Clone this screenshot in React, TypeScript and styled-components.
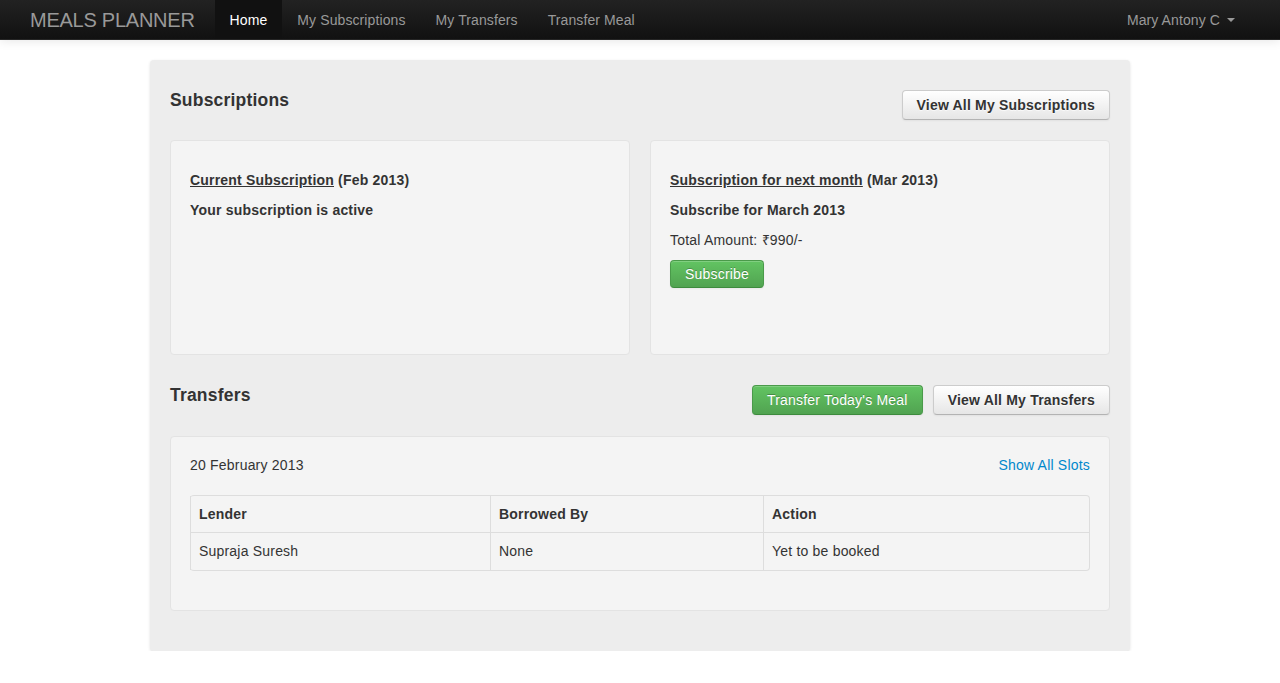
import React from "react";
import styled, { createGlobalStyle } from "styled-components";

const Global = createGlobalStyle`
  html, body { margin: 0; padding: 0; background: #fff; }
  body {
    font-family: "Liberation Sans", Arial, Helvetica, sans-serif;
    font-size: 14px;
    line-height: 20px;
    color: #333;
    letter-spacing: 0.2px;
  }
  * { box-sizing: border-box; }
`;

const NavBar = styled.div`
  height: 40px;
  background: linear-gradient(to bottom, #222222, #111111);
  border-bottom: 1px solid #252525;
  box-shadow: 0 1px 10px rgba(0, 0, 0, 0.1);
  display: flex;
  align-items: stretch;
  padding: 0 30px 0 10px;
`;

const Brand = styled.a`
  display: flex;
  align-items: center;
  padding: 0 20px;
  font-size: 20px;
  font-weight: 200;
  color: #999;
  text-decoration: none;
  letter-spacing: -0.25px;
`;

const NavLinks = styled.div`
  display: flex;
  align-items: stretch;
`;

const NavLink = styled.a<{ $active?: boolean }>`
  display: flex;
  align-items: center;
  padding: 0 15px;
  color: ${(p) => (p.$active ? "#fff" : "#999")};
  background: ${(p) => (p.$active ? "#111" : "transparent")};
  text-decoration: none;
  font-size: 14px;
  letter-spacing: 0.1px;
`;

const Spacer = styled.div`
  flex: 1;
`;

const Caret = styled.span`
  display: inline-block;
  width: 0;
  height: 0;
  margin-left: 7px;
  margin-top: 1px;
  border-top: 4px solid #999;
  border-left: 4px solid transparent;
  border-right: 4px solid transparent;
`;

const Container = styled.div`
  width: 980px;
  margin: 20px auto 0;
`;

const Well = styled.div`
  background: #ededed;
  border-radius: 4px;
  box-shadow: 0 1px 3px rgba(0, 0, 0, 0.12);
  padding: 20px;
`;

const SectionHead = styled.div<{ $flush?: boolean }>`
  display: flex;
  align-items: flex-start;
  justify-content: space-between;
  margin-bottom: ${(p) => (p.$flush ? "0" : "20px")};
`;

const Heading = styled.h4`
  margin: 10px 0 0;
  font-size: 17.5px;
  line-height: 20px;
  font-weight: bold;
  color: #333;
`;

const ButtonGroup = styled.div`
  display: flex;
  gap: 10px;
  margin-top: 10px;
`;

const Button = styled.button<{ $variant?: "default" | "success"; $bold?: boolean }>`
  font-family: inherit;
  font-size: 14px;
  line-height: 20px;
  letter-spacing: 0.2px;
  padding: ${(p) => (p.$variant === "success" ? "3px 14px" : "4px 14px")};
  border-radius: 4px;
  cursor: pointer;
  font-weight: ${(p) => (p.$bold ? "bold" : "normal")};
  ${(p) =>
    p.$variant === "success"
      ? `
    color: #fff;
    text-shadow: 0 -1px 0 rgba(0,0,0,0.25);
    background: linear-gradient(to bottom, #62c462, #51a351);
    border: 1px solid #4a9a4a;
    border-bottom-color: #3d8b3d;
    box-shadow: inset 0 1px 0 rgba(255,255,255,0.2), 0 1px 2px rgba(0,0,0,0.05);
  `
      : `
    color: #333;
    text-shadow: 0 1px 1px rgba(255,255,255,0.75);
    background: linear-gradient(to bottom, #ffffff, #e6e6e6);
    border: 1px solid #cccccc;
    border-bottom-color: #b3b3b3;
    box-shadow: inset 0 1px 0 rgba(255,255,255,0.2), 0 1px 2px rgba(0,0,0,0.05);
  `}
`;

const Row = styled.div`
  display: grid;
  grid-template-columns: 1fr 1fr;
  gap: 20px;
  margin-bottom: 20px;
`;

const Panel = styled.div<{ $minHeight?: number; $spaced?: boolean }>`
  background: #f4f4f4;
  border: 1px solid #e3e3e3;
  border-radius: 4px;
  padding: 19px;
  min-height: ${(p) => (p.$minHeight ? `${p.$minHeight}px` : "auto")};
  margin: ${(p) => (p.$spaced ? "21px 0 20px" : "0")};
`;

const PanelBody = styled.div`
  padding-top: 10px;
  display: flex;
  flex-direction: column;
  align-items: flex-start;
  gap: 10px;
`;

const Line = styled.p<{ $bold?: boolean }>`
  margin: 0;
  font-weight: ${(p) => (p.$bold ? "bold" : "normal")};
`;

const UnderLink = styled.a`
  color: #333;
  text-decoration: underline;
`;

const PanelTop = styled.div`
  display: flex;
  justify-content: space-between;
  margin-top: -1px;
  margin-bottom: 20px;
`;

const BlueLink = styled.a`
  color: #0088cc;
  text-decoration: none;
`;

const Table = styled.table`
  width: 100%;
  border-collapse: separate;
  border-spacing: 0;
  border: 1px solid #dddddd;
  border-left: 0;
  border-radius: 4px;
  margin-bottom: 20px;
`;

const Th = styled.th<{ $w?: number }>`
  text-align: left;
  font-weight: bold;
  padding: 8px;
  line-height: 20px;
  border-left: 1px solid #dddddd;
  width: ${(p) => (p.$w ? `${p.$w}px` : "auto")};
`;

const Td = styled.td`
  padding: 8px 8px 9px;
  line-height: 20px;
  border-left: 1px solid #dddddd;
  border-top: 1px solid #dddddd;
`;

export default function App() {
  return (
    <>
      <Global />
      <NavBar>
        <Brand href="#">MEALS PLANNER</Brand>
        <NavLinks>
          <NavLink href="#" $active>
            Home
          </NavLink>
          <NavLink href="#">My Subscriptions</NavLink>
          <NavLink href="#">My Transfers</NavLink>
          <NavLink href="#">Transfer Meal</NavLink>
        </NavLinks>
        <Spacer />
        <NavLinks>
          <NavLink href="#">
            Mary Antony C<Caret />
          </NavLink>
        </NavLinks>
      </NavBar>

      <Container>
        <Well>
          <SectionHead>
            <Heading>Subscriptions</Heading>
            <ButtonGroup>
              <Button $bold>View All My Subscriptions</Button>
            </ButtonGroup>
          </SectionHead>
          <Row>
            <Panel $minHeight={215}>
              <PanelBody>
                <Line $bold>
                  <UnderLink href="#">Current Subscription</UnderLink> (Feb 2013)
                </Line>
                <Line $bold>Your subscription is active</Line>
              </PanelBody>
            </Panel>
            <Panel $minHeight={215}>
              <PanelBody>
                <Line $bold>
                  <UnderLink href="#">Subscription for next month</UnderLink> (Mar 2013)
                </Line>
                <Line $bold>Subscribe for March 2013</Line>
                <Line>Total Amount: ₹990/-</Line>
                <Button $variant="success">Subscribe</Button>
              </PanelBody>
            </Panel>
          </Row>

          <SectionHead $flush>
            <Heading>Transfers</Heading>
            <ButtonGroup>
              <Button $variant="success">Transfer Today's Meal</Button>
              <Button $bold>View All My Transfers</Button>
            </ButtonGroup>
          </SectionHead>
          <Panel $spaced>
            <PanelTop>
              <span>20 February 2013</span>
              <BlueLink href="#">Show All Slots</BlueLink>
            </PanelTop>
            <Table>
              <thead>
                <tr>
                  <Th $w={300}>Lender</Th>
                  <Th $w={273}>Borrowed By</Th>
                  <Th>Action</Th>
                </tr>
              </thead>
              <tbody>
                <tr>
                  <Td>Supraja Suresh</Td>
                  <Td>None</Td>
                  <Td>Yet to be booked</Td>
                </tr>
              </tbody>
            </Table>
          </Panel>
        </Well>
      </Container>
    </>
  );
}
